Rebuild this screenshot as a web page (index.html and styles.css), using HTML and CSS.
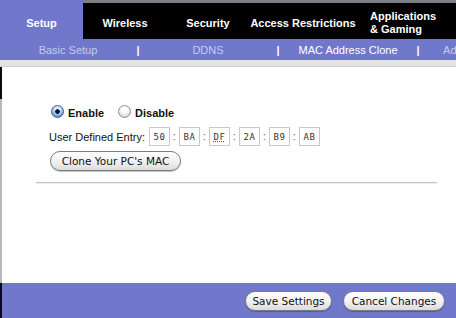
FILE: index.html
```html
<!DOCTYPE html>
<html lang="en">
<head>
  <meta charset="UTF-8">
  <title>Setup | MAC Address Clone</title>
  <link rel="stylesheet" href="styles.css">
</head>
<body>
  <div class="page">
    <div class="nav">
      <div class="tab-active">Setup</div>
      <ul class="tabs">
        <li class="tab-wireless">Wireless</li>
        <li class="tab-security">Security</li>
        <li class="tab-access">Access Restrictions</li>
        <li class="tab-apps">Applications<br>&amp; Gaming</li>
      </ul>
      <div class="subnav">
        <span class="sub">Basic Setup</span>
        <span class="sep">|</span>
        <span class="sub">DDNS</span>
        <span class="sep">|</span>
        <span class="sub current">MAC Address Clone</span>
        <span class="sep">|</span>
        <span class="sub">Advanced Routing</span>
      </div>
    </div>
    <div class="strip"></div>

    <div class="content">
      <div class="radios">
        <label class="radio"><input type="radio" name="clone" checked> Enable</label>
        <label class="radio"><input type="radio" name="clone"> Disable</label>
      </div>
      <div class="entry">
        <span class="entry-label">User Defined Entry:</span>
        <span class="mac">50</span><span class="colon">:</span>
        <span class="mac">BA</span><span class="colon">:</span>
        <span class="mac misspelt">DF</span><span class="colon">:</span>
        <span class="mac">2A</span><span class="colon">:</span>
        <span class="mac">B9</span><span class="colon">:</span>
        <span class="mac">AB</span>
      </div>
      <button class="btn btn-clone">Clone Your PC's MAC</button>
      <div class="rule"></div>
    </div>

    <div class="footer">
      <button class="btn btn-save">Save Settings</button>
      <button class="btn btn-cancel">Cancel Changes</button>
    </div>
  </div>
</body>
</html>
```

FILE: styles.css
```css
*{
  margin: 0;
  padding: 0;
  box-sizing: border-box;
}
body{
  font-family: "Liberation Sans", Arial, sans-serif;
  background-color: #fff;
  width: 456px;
  height: 318px;
  overflow: hidden;
}
.page{
  display: flex;
  flex-direction: column;
  height: 318px;
}

/* top navigation */
.nav{
  display: grid;
  grid-template-columns: 83px 1fr;
  grid-template-rows: 39px 21px;
  background-color: #7078cb;
}
.tab-active{
  display: flex;
  align-items: center;
  justify-content: center;
  padding-top: 7px;
  color: #fff;
  font-weight: bold;
  font-size: 11px;
}
.tabs{
  list-style: none;
  display: flex;
  background-color: #000;
  border-top: 3px solid #7d7d85;
  color: #fff;
  font-weight: bold;
  font-size: 11px;
}
.tabs li{
  display: flex;
  align-items: center;
  justify-content: center;
  padding-top: 4px;
  white-space: nowrap;
}
.tab-wireless{ width: 84px; }
.tab-security{ width: 82px; }
.tab-access{ width: 108px; }
.tab-apps{
  width: 102px;
  line-height: 13px;
  text-align: left;
  padding-left: 13px;
  justify-content: flex-start !important;
}
.subnav{
  grid-column: 1 / 3;
  display: flex;
  align-items: center;
  padding-left: 33px;
  overflow: hidden;
  font-size: 11px;
  color: #c6caf1;
}
.subnav span{
  flex: 0 0 70px;
  min-width: 0;
  display: flex;
  justify-content: center;
  white-space: nowrap;
}
.subnav .current,
.subnav .sep{
  color: #fff;
}
.subnav .sep{
  font-weight: bold;
}
.strip{
  height: 7px;
  background-color: #e4e4e6;
  border-bottom: 1px solid #d0d0d2;
}

/* main panel */
.content{
  flex: 1;
  padding: 40px 0 0 49px;
  background: linear-gradient(to bottom, #0a0a14 0 32px, #b9b9bb 32px) left top / 2px 100% no-repeat, #fff;
  font-size: 11px;
  color: #111;
}
.radios{
  display: flex;
  gap: 14px;
  padding-left: 2px;
  font-weight: bold;
}
.radio{
  display: flex;
  align-items: center;
  gap: 4px;
}
.radio input{
  appearance: none;
  width: 13px;
  height: 13px;
  border-radius: 50%;
  border: 1px solid #8d8d92;
  background: radial-gradient(circle at 50% 30%, #fff 0 30%, #d6d6d8 80%);
  margin-top: -4px;
}
.radio input:checked{
  border-color: #355c9e;
  background: radial-gradient(circle, #111 0 2px, transparent 2.5px), radial-gradient(circle at 50% 30%, #d9ecff 0 25%, #5f9ae3 75%, #3c6fc0 100%);
}
.entry{
  display: flex;
  align-items: center;
  margin-top: 8px;
  height: 19px;
}
.entry-label{
  margin-right: 4px;
}
.mac{
  width: 21px;
  height: 19px;
  border: 1px solid #c9c9c9;
  font-family: "DejaVu Sans Mono", monospace;
  font-size: 9px;
  color: #333;
  display: flex;
  align-items: center;
  justify-content: center;
  letter-spacing: 0.5px;
}
.misspelt{
  text-decoration: underline dotted #d02020;
}
.colon{
  width: 9px;
  text-align: center;
  color: #555;
  font-size: 10px;
}
.btn{
  font-family: "DejaVu Sans", sans-serif;
  font-size: 10.5px;
  color: #111;
  height: 20px;
  border: 1px solid #7b7b80;
  border-radius: 10px;
  background: linear-gradient(to bottom, #ffffff 0%, #f2f2f2 50%, #dcdcdc 100%);
  box-shadow: 0 1px 1px rgba(0,0,0,0.25);
}
.btn-clone{
  display: block;
  width: 131px;
  margin: 5px 0 0 1px;
}
.rule{
  width: 401px;
  margin: 11px 0 0 -13px;
  border-top: 1px solid #c5c5c8;
  border-bottom: 1px solid #ececee;
}

/* bottom bar */
.footer{
  height: 35px;
  display: flex;
  justify-content: flex-end;
  align-items: center;
  gap: 11px;
  padding-right: 11px;
  background: linear-gradient(to right, #0a0a14 0 2px, #7078cb 2px);
}
.btn-save{ width: 87px; }
.btn-cancel{ width: 102px; }
```
